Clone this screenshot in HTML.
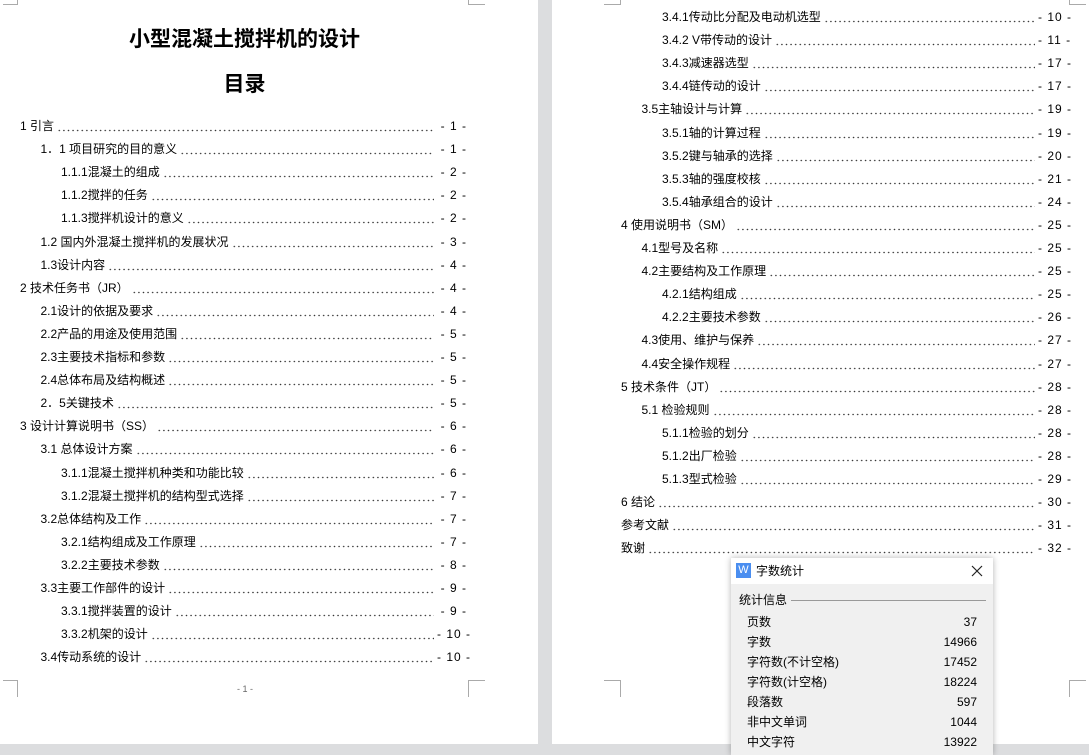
<!DOCTYPE html>
<html><head><meta charset="utf-8"><style>
*{margin:0;padding:0;box-sizing:border-box}
body{width:1089px;height:755px;overflow:hidden;background:#dcdddf;position:relative;font-family:"Liberation Sans","Noto Sans CJK SC",sans-serif;color:#000}
.page{position:absolute;top:0;height:744px;background:#fff}
.r{position:absolute;height:16px;font-size:12px;line-height:16px;display:flex;white-space:nowrap}
.r .d{flex:1;margin:0 3px;background-image:radial-gradient(circle,#333 0.6px,transparent 0.9px);background-size:4.6px 3px;background-repeat:repeat-x;background-position:0 11px}
.r .n{width:30px;text-align:right;letter-spacing:1px}
.t{position:absolute;font-weight:bold;font-size:21px;text-align:center;left:0;width:489px}
.c{position:absolute;border-color:#aaa;border-style:solid;border-width:0}
.dlg{position:absolute;left:731px;top:558px;width:262px;height:197px;background:#f0f0f0;box-shadow:0 0 6px rgba(0,0,0,.3);font-size:12px}
.dh{height:26px;background:#fff;position:relative}
.dr{position:absolute;left:16px;width:230px;display:flex;justify-content:space-between;line-height:16px}
</style></head><body>
<div class="page" style="left:0;width:538px"></div>
<div class="page" style="left:552px;width:537px"></div>
<div class="c" style="left:3px;top:0;width:15px;height:5px;border-bottom-width:1px;border-right-width:1px"></div>
<div class="c" style="left:468px;top:0;width:17px;height:5px;border-bottom-width:1px;border-left-width:1px"></div>
<div class="c" style="left:604px;top:0;width:17px;height:5px;border-bottom-width:1px;border-right-width:1px"></div>
<div class="c" style="left:1069px;top:0;width:17px;height:5px;border-bottom-width:1px;border-left-width:1px"></div>
<div class="c" style="left:3px;top:680px;width:15px;height:17px;border-top-width:1px;border-right-width:1px"></div>
<div class="c" style="left:468px;top:680px;width:17px;height:17px;border-top-width:1px;border-left-width:1px"></div>
<div class="c" style="left:604px;top:680px;width:17px;height:17px;border-top-width:1px;border-right-width:1px"></div>
<div class="c" style="left:1069px;top:680px;width:17px;height:17px;border-top-width:1px;border-left-width:1px"></div>
<div style="position:absolute;left:230px;top:684px;width:30px;text-align:center;font-size:9px;color:#666">- 1 -</div>
<div class="t" style="top:23px">小型混凝土搅拌机的设计</div>
<div class="t" style="top:68px">目录</div>
<div id="L"></div>
<div class="dlg">
<div class="dh"><div style="position:absolute;left:5px;top:5px;width:15px;height:15px;background:#4a8ef0;color:#fff;font-size:11px;line-height:15px;text-align:center">W</div><div style="position:absolute;left:25px;top:5px;line-height:16px">字数统计</div>
<svg style="position:absolute;left:240px;top:7px" width="12" height="12" viewBox="0 0 12 12"><path d="M1 1L11 11M11 1L1 11" stroke="#222" stroke-width="1.2"/></svg></div>
<div style="position:absolute;left:8px;top:34px;line-height:16px">统计信息</div>
<div style="position:absolute;left:60px;top:42px;width:195px;border-top:1px solid #999"></div>
<div class="dr" style="top:56px"><span>页数</span><span>37</span></div>
<div class="dr" style="top:76px"><span>字数</span><span>14966</span></div>
<div class="dr" style="top:96px"><span>字符数(不计空格)</span><span>17452</span></div>
<div class="dr" style="top:116px"><span>字符数(计空格)</span><span>18224</span></div>
<div class="dr" style="top:136px"><span>段落数</span><span>597</span></div>
<div class="dr" style="top:156px"><span>非中文单词</span><span>1044</span></div>
<div class="dr" style="top:176px"><span>中文字符</span><span>13922</span></div>
</div>
<script>
var L=[[0,"1 引言",1],[1,"1．1  项目研究的目的意义",1],[2,"1.1.1混凝土的组成",2],[2,"1.1.2搅拌的任务",2],[2,"1.1.3搅拌机设计的意义",2],[1,"1.2  国内外混凝土搅拌机的发展状况",3],[1,"1.3设计内容",4],[0,"2 技术任务书（JR）",4],[1,"2.1设计的依据及要求",4],[1,"2.2产品的用途及使用范围",5],[1,"2.3主要技术指标和参数",5],[1,"2.4总体布局及结构概述",5],[1,"2．5关键技术",5],[0,"3 设计计算说明书（SS）",6],[1,"3.1  总体设计方案",6],[2,"3.1.1混凝土搅拌机种类和功能比较",6],[2,"3.1.2混凝土搅拌机的结构型式选择",7],[1,"3.2总体结构及工作",7],[2,"3.2.1结构组成及工作原理",7],[2,"3.2.2主要技术参数",8],[1,"3.3主要工作部件的设计",9],[2,"3.3.1搅拌装置的设计",9],[2,"3.3.2机架的设计",10],[1,"3.4传动系统的设计",10]];
var R=[[2,"3.4.1传动比分配及电动机选型",10],[2,"3.4.2 V带传动的设计",11],[2,"3.4.3减速器选型",17],[2,"3.4.4链传动的设计",17],[1,"3.5主轴设计与计算",19],[2,"3.5.1轴的计算过程",19],[2,"3.5.2键与轴承的选择",20],[2,"3.5.3轴的强度校核",21],[2,"3.5.4轴承组合的设计",24],[0,"4 使用说明书（SM）",25],[1,"4.1型号及名称",25],[1,"4.2主要结构及工作原理",25],[2,"4.2.1结构组成",25],[2,"4.2.2主要技术参数",26],[1,"4.3使用、维护与保养",27],[1,"4.4安全操作规程",27],[0,"5 技术条件（JT）",28],[1,"5.1  检验规则",28],[2,"5.1.1检验的划分",28],[2,"5.1.2出厂检验",28],[2,"5.1.3型式检验",29],[0,"6 结论",30],[0,"参考文献",31],[0,"致谢",32]];
var h="";
function put(a,x0,y0,right){a.forEach(function(e,i){var x=x0+e[0]*20.5;h+='<div class="r" style="left:'+x+'px;width:'+(right-x)+'px;top:'+(y0+i*23.1)+'px"><span>'+e[1]+'</span><span class="d"></span><span class="n">- '+e[2]+' -</span></div>';});}
put(L,20,118,467);put(R,621,9,1068);
document.getElementById("L").innerHTML=h;
</script>
</body></html>
